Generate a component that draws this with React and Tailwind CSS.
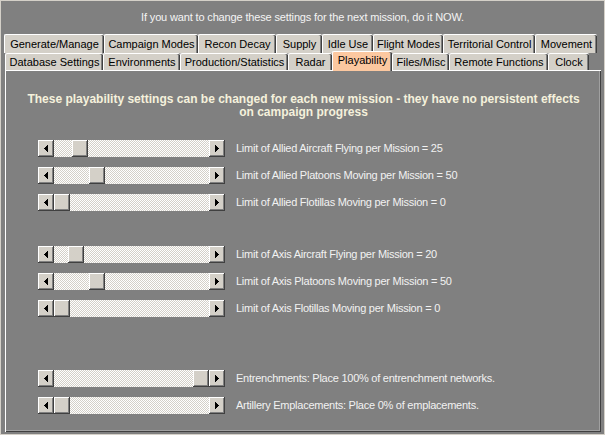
import React from "react";

const row1 = [
  { t: "Generate/Manage", w: "w-[100px]" },
  { t: "Campaign Modes", w: "w-[94px]" },
  { t: "Recon Decay", w: "w-[78px]" },
  { t: "Supply", w: "w-[46px]" },
  { t: "Idle Use", w: "w-[51px]" },
  { t: "Flight Modes", w: "w-[70px]" },
  { t: "Territorial Control", w: "w-[92px]" },
  { t: "Movement", w: "w-[62px]" },
];

const row2 = [
  { t: "Database Settings", w: "w-[98px]" },
  { t: "Environments", w: "w-[77px]" },
  { t: "Production/Statistics", w: "w-[108px]" },
  { t: "Radar", w: "w-[44px]" },
  { t: "Playability", w: "w-[60px]", active: true },
  { t: "Files/Misc", w: "w-[57px]" },
  { t: "Remote Functions", w: "w-[99px]" },
  { t: "Clock", w: "w-[41px]" },
];

const groups = [
  {
    cls: "mt-[21px]",
    rows: [
      { label: "Limit of Allied Aircraft Flying per Mission = 25", pos: 18 },
      { label: "Limit of Allied Platoons Moving per Mission = 50", pos: 35 },
      { label: "Limit of Allied Flotillas Moving per Mission = 0", pos: 0 },
    ],
  },
  {
    cls: "mt-[35px]",
    rows: [
      { label: "Limit of Axis Aircraft Flying per Mission = 20", pos: 14 },
      { label: "Limit of Axis Platoons Moving per Mission = 50", pos: 35 },
      { label: "Limit of Axis Flotillas Moving per Mission = 0", pos: 0 },
    ],
  },
  {
    cls: "mt-[53px]",
    rows: [
      { label: "Entrenchments: Place 100% of entrenchment networks.", pos: 139 },
      { label: "Artillery Emplacements: Place 0% of emplacements.", pos: 0 },
    ],
  },
];

function Arrow({ dir }) {
  const cols = dir === "left" ? [0, 1, 2, 3] : [3, 2, 1, 0];
  return (
    <svg width="4" height="7" viewBox="0 0 4 7" shapeRendering="crispEdges">
      {cols.map((c, i) => (
        <rect key={i} x={i} y={3 - c} width="1" height={c * 2 + 1} fill="#000" />
      ))}
    </svg>
  );
}

const btn =
  "w-[16px] h-[17px] shrink-0 bg-[#d4d0c8] flex items-center justify-center shadow-[inset_-1px_-1px_#404040,inset_1px_1px_#ffffff,inset_-2px_-2px_#808080]";

function ScrollBar({ pos }) {
  return (
    <div className="flex w-[187px] h-[17px] shrink-0">
      <div className={btn}>
        <Arrow dir="left" />
      </div>
      <div className="flex-1 h-[17px] bg-[image:repeating-conic-gradient(#d4d0c8_0_25%,#ffffff_0_50%)] bg-[size:2px_2px]">
        <div className={btn} style={{ marginLeft: pos }} />
      </div>
      <div className={btn}>
        <Arrow dir="right" />
      </div>
    </div>
  );
}

function Tab({ t, w, active }) {
  if (active) {
    return (
      <div
        className={`${w} h-[20px] -mt-[2px] mb-[-1px] relative z-10 shrink-0 bg-[#fcc8a0] border-l border-t border-white rounded-t-[2px] shadow-[inset_-1px_0_#404040,inset_-2px_0_#808080] flex items-center justify-center text-[11px] text-black pb-[2px]`}
      >
        {t}
      </div>
    );
  }
  return (
    <div
      className={`${w} h-full shrink-0 bg-[#d4d0c8] border-l border-t border-white rounded-t-[2px] shadow-[inset_-1px_0_#404040,inset_-2px_0_#808080] flex items-center justify-center text-[11px] text-black`}
    >
      {t}
    </div>
  );
}

export default function App() {
  return (
    <div className="w-[605px] h-[435px] bg-[#808080] border border-[#d4d0c8] flex flex-col overflow-hidden font-['Liberation_Sans',Arial,sans-serif]">
      <div className="h-[33px] shrink-0 flex items-center justify-center text-[11px] tracking-[-0.15px] text-[#f4f4f4]">
        If you want to change these settings for the next mission, do it NOW.
      </div>
      <div className="flex h-[19px] pl-[3px] shrink-0">
        {row1.map((r) => (
          <Tab key={r.t} {...r} />
        ))}
      </div>
      <div className="flex h-[17px] pl-[4px] shrink-0">
        {row2.map((r) => (
          <Tab key={r.t} {...r} />
        ))}
      </div>
      <div className="mx-[4px] w-[596px] h-[362px] shrink-0 border-l border-t border-white shadow-[inset_-1px_-1px_#404040,inset_-2px_-2px_#a0a0a0] bg-[#808080] flex flex-col">
        <div className="mt-[22px] text-center text-[12px] font-bold leading-[13px] text-[#f5f1dc]">
          These playability settings can be changed for each new mission - they have no persistent effects
          <br />
          on campaign progress
        </div>
        {groups.map((g, gi) => (
          <div key={gi} className={`${g.cls} flex flex-col gap-[10px] pl-[32px]`}>
            {g.rows.map((r) => (
              <div key={r.label} className="flex items-center h-[17px] gap-[11px]">
                <ScrollBar pos={r.pos} />
                <span className="text-[11px] tracking-[-0.25px] text-[#f2f2f2] whitespace-nowrap">
                  {r.label}
                </span>
              </div>
            ))}
          </div>
        ))}
      </div>
    </div>
  );
}
